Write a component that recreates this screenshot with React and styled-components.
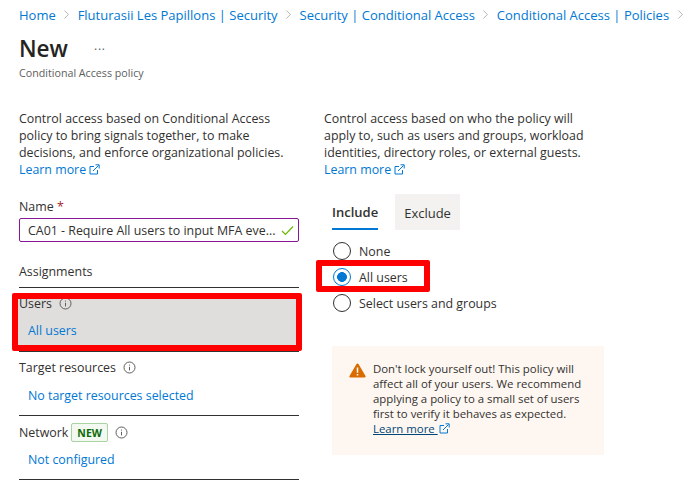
import styled, { createGlobalStyle } from 'styled-components';
import { ChevronRight } from 'lucide-react';

const GlobalStyle = createGlobalStyle`
  html, body {
    margin: 0;
    padding: 0;
    background: #fff;
    overflow: hidden;
  }
  body {
    font-family: "Open Sans", "Noto Sans", Arial, sans-serif;
    font-size: 12.4px;
    color: #323130;
  }
`;

function LinkOutIcon() {
  return (
    <svg width="11" height="11" viewBox="0 0 11 11" fill="none" stroke="#0078d4" strokeWidth="1">
      <path d="M5 2.5H1v7.5h7.5V6" />
      <path d="M4 7 9.5 1.5M6.5 .8h3.7v3.7" />
    </svg>
  );
}

function InfoIcon() {
  return (
    <svg width="13" height="13" viewBox="0 0 13 13" fill="none">
      <circle cx="6.5" cy="6.5" r="5.5" stroke="#605e5c" />
      <path d="M6.5 5.8v3.6" stroke="#605e5c" />
      <path d="M6.5 3.6v1" stroke="#605e5c" />
    </svg>
  );
}

const Page = styled.div`
  width: 691px;
  height: 483px;
  padding-left: 19px;
  box-sizing: border-box;
  overflow: hidden;
`;

const Breadcrumbs = styled.nav`
  display: flex;
  align-items: center;
  height: 15px;
  margin-top: 7px;
  white-space: nowrap;
  font-size: 13px;
`;

const Crumb = styled.span`
  color: #0078d4;
`;

const Sep = styled.span`
  display: inline-flex;
  width: 23px;
  justify-content: center;
  color: #8a8886;
`;

const TitleRow = styled.div`
  display: flex;
  align-items: center;
  margin-top: 9px;
  height: 34px;
  margin-bottom: 1px;
`;

const Title = styled.h1`
  margin: 0;
  font-size: 22.5px;
  font-weight: 600;
  color: #252423;
`;

const More = styled.span`
  margin-left: 26px;
  margin-top: -5px;
  font-size: 12px;
  line-height: 1;
  letter-spacing: 0.8px;
  color: #605e5c;
`;

const Subtitle = styled.div`
  font-size: 10.7px;
  line-height: 14px;
  color: #605e5c;
`;

const Columns = styled.div`
  display: grid;
  grid-template-columns: 280px 300px;
  column-gap: 25px;
  margin-top: 30px;
`;

const Column = styled.div`
  display: flex;
  flex-direction: column;
`;

const Para = styled.p`
  margin: 0;
  line-height: 17px;
`;

const Learn = styled.span`
  display: inline-flex;
  align-items: center;
  gap: 3px;
  color: #0078d4;
`;

const FieldLabel = styled.div`
  margin-top: 20px;
  line-height: 17px;
`;

const Star = styled.span`
  color: #a4262c;
`;

const NameInput = styled.div`
  display: flex;
  align-items: center;
  justify-content: space-between;
  box-sizing: border-box;
  height: 24px;
  margin-top: 3px;
  padding: 0 4px 0 8px;
  border: 1px solid #881798;
  border-radius: 2px;
  white-space: nowrap;
`;

const SectionTitle = styled.div`
  margin-top: 21px;
  padding-bottom: 7px;
  line-height: 17px;
  border-bottom: 1px solid #323130;
`;

const Item = styled.div`
  position: relative;
  box-sizing: border-box;
  height: 64px;
  padding-top: ${(p) => p.$top}px;
  border-bottom: 1px solid #323130;
`;

const ItemHead = styled.div`
  position: relative;
  display: flex;
  align-items: center;
  height: 17px;
`;

const ItemLink = styled.div`
  position: relative;
  margin-top: ${(p) => p.$gap}px;
  padding-left: 9px;
  line-height: 17px;
  color: #0078d4;
`;

const InfoSlot = styled.span`
  display: inline-flex;
  margin-left: 7px;
`;

const Badge = styled.span`
  display: inline-flex;
  align-items: center;
  box-sizing: border-box;
  height: 19px;
  margin-left: 3px;
  padding: 0 5px;
  font-size: 10.5px;
  font-weight: 700;
  color: #0b6a0b;
  background: #f3f9f1;
  border: 1px solid #a9d3a2;
  border-radius: 2px;
`;

const Shade = styled.div`
  position: absolute;
  left: -1px;
  top: 6px;
  width: 279px;
  height: 53px;
  background: #e0dedc;
`;

const RedBox = styled.div`
  position: absolute;
  box-sizing: border-box;
  left: ${(p) => p.$l}px;
  top: ${(p) => p.$t}px;
  width: ${(p) => p.$w}px;
  height: ${(p) => p.$h}px;
  border: 6px solid #fe0000;
  border-radius: 2px;
  pointer-events: none;
`;

const Tabs = styled.div`
  display: flex;
  align-items: stretch;
  height: 36px;
  margin: 16px 0 0 8px;
  font-size: 13px;
`;

const Tab = styled.div`
  display: flex;
  align-items: center;
  box-sizing: border-box;
  padding: ${(p) => (p.$active ? '2px 0 0' : '2px 9px 0')};
  margin-right: ${(p) => (p.$active ? 17 : 0)}px;
  font-weight: ${(p) => (p.$active ? 600 : 400)};
  background: ${(p) => (p.$active ? 'transparent' : '#f3f2f1')};
  border-bottom: ${(p) => (p.$active ? '2px solid #0078d4' : 'none')};
`;

const Radios = styled.div`
  position: relative;
  display: flex;
  flex-direction: column;
  gap: 8px;
  margin: 12px 0 0 9px;
`;

const RadioRow = styled.label`
  display: flex;
  align-items: center;
  gap: 8px;
  height: 18px;
`;

const Dot = styled.span`
  box-sizing: border-box;
  display: block;
  width: 18px;
  height: 18px;
  border-radius: 50%;
  border: 1px solid ${(p) => (p.$on ? '#0078d4' : '#323130')};
  background: ${(p) => (p.$on ? 'radial-gradient(circle, #0078d4 0 4.6px, #fff 5.2px)' : '#fff')};
`;

const Warning = styled.div`
  display: flex;
  align-items: flex-start;
  gap: 7px;
  box-sizing: border-box;
  width: 272px;
  height: 109px;
  margin: 34px 0 0 8px;
  padding: 15px 17px;
  background: #fef7f1;
  font-size: 11.4px;
  line-height: 15px;
`;

const WarnIcon = styled.svg`
  flex: none;
  margin-top: 2px;
`;

const WarnText = styled.div`
  flex: 1;
  white-space: nowrap;
`;

const WarnLink = styled.span`
  display: inline-flex;
  align-items: center;
  gap: 1px;
  color: #004578;
  u { white-space: pre; }
`;

export default function App() {
  return (
    <Page>
      <GlobalStyle />
      <Breadcrumbs>
        <Crumb>Home</Crumb>
        <Sep><ChevronRight size={15} strokeWidth={1} /></Sep>
        <Crumb>Fluturasii Les Papillons | Security</Crumb>
        <Sep><ChevronRight size={15} strokeWidth={1} /></Sep>
        <Crumb>Security | Conditional Access</Crumb>
        <Sep><ChevronRight size={15} strokeWidth={1} /></Sep>
        <Crumb>Conditional Access | Policies</Crumb>
        <Sep><ChevronRight size={15} strokeWidth={1} /></Sep>
      </Breadcrumbs>
      <TitleRow>
        <Title>New</Title>
        <More>...</More>
      </TitleRow>
      <Subtitle>Conditional Access policy</Subtitle>
      <Columns>
        <Column>
          <Para>
            Control access based on Conditional Access
            <br />policy to bring signals together, to make
            <br />decisions, and enforce organizational policies.
            <br /><Learn>Learn more <LinkOutIcon /></Learn>
          </Para>
          <FieldLabel>Name <Star>*</Star></FieldLabel>
          <NameInput>
            <span>CA01 - Require All users to input MFA eve...</span>
            <svg width="13" height="13" viewBox="0 0 13 13" fill="none" stroke="#6bb700" strokeWidth="1.2">
              <path d="M1 7l3.5 3.5L12 2.5" />
            </svg>
          </NameInput>
          <SectionTitle>Assignments</SectionTitle>
          <Item $top={7}>
            <Shade />
            <ItemHead>Users <InfoSlot><InfoIcon /></InfoSlot></ItemHead>
            <ItemLink $gap={10}>All users</ItemLink>
            <RedBox $l={-7} $t={5} $w={290} $h={58} />
          </Item>
          <Item $top={7}>
            <ItemHead>Target resources <InfoSlot><InfoIcon /></InfoSlot></ItemHead>
            <ItemLink $gap={11}>No target resources selected</ItemLink>
          </Item>
          <Item $top={8}>
            <ItemHead>
              Network <Badge>NEW</Badge>
              <InfoSlot><InfoIcon /></InfoSlot>
            </ItemHead>
            <ItemLink $gap={10}>Not configured</ItemLink>
          </Item>
        </Column>
        <Column>
          <Para>
            Control access based on who the policy will
            <br />apply to, such as users and groups, workload
            <br />identities, directory roles, or external guests.
            <br /><Learn>Learn more <LinkOutIcon /></Learn>
          </Para>
          <Tabs>
            <Tab $active>Include</Tab>
            <Tab>Exclude</Tab>
          </Tabs>
          <Radios>
            <RadioRow><Dot />None</RadioRow>
            <RadioRow><Dot $on />All users</RadioRow>
            <RadioRow><Dot />Select users and groups</RadioRow>
            <RedBox $l={-17} $t={18} $w={114} $h={32} />
          </Radios>
          <Warning>
            <WarnIcon width="17" height="15" viewBox="0 0 17 15">
              <path d="M8.5 0.5c.5 0 .8.2 1 .6l7 12c.4.7 0 1.4-.8 1.4H1.3c-.8 0-1.2-.7-.8-1.4l7-12c.2-.4.5-.6 1-.6z" fill="#d96b00" />
              <path d="M8.5 4.5v5.2M8.5 11v1.6" stroke="#fff" strokeWidth="1.5" />
            </WarnIcon>
            <WarnText>
              Don't lock yourself out! This policy will
              <br />affect all of your users. We recommend
              <br />applying a policy to a small set of users
              <br />first to verify it behaves as expected.
              <br /><WarnLink><u>Learn more </u><LinkOutIcon /></WarnLink>
            </WarnText>
          </Warning>
        </Column>
      </Columns>
    </Page>
  );
}
